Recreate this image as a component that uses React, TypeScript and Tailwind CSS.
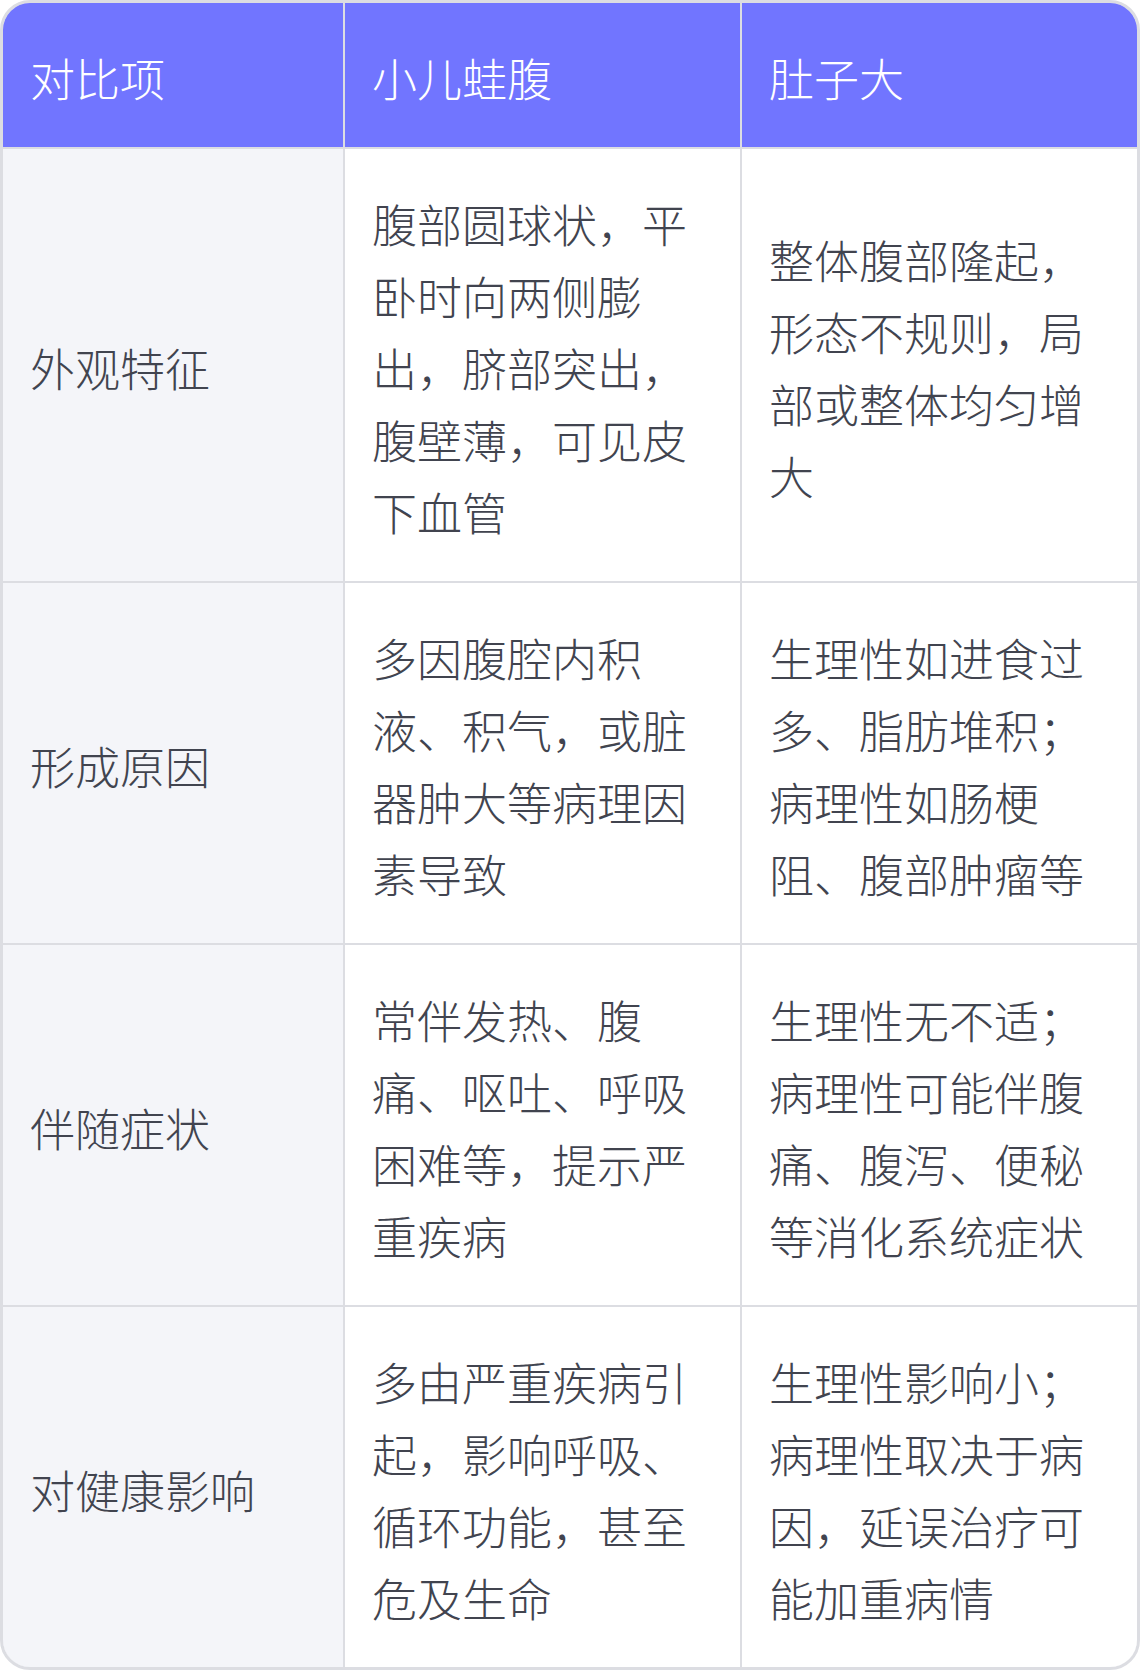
const rows = [
  {
    item: "外观特征",
    frog: "腹部圆球状，平卧时向两侧膨出，脐部突出，腹壁薄，可见皮下血管",
    big: "整体腹部隆起，形态不规则，局部或整体均匀增大",
  },
  {
    item: "形成原因",
    frog: "多因腹腔内积液、积气，或脏器肿大等病理因素导致",
    big: "生理性如进食过多、脂肪堆积；病理性如肠梗阻、腹部肿瘤等",
  },
  {
    item: "伴随症状",
    frog: "常伴发热、腹痛、呕吐、呼吸困难等，提示严重疾病",
    big: "生理性无不适；病理性可能伴腹痛、腹泻、便秘等消化系统症状",
  },
  {
    item: "对健康影响",
    frog: "多由严重疾病引起，影响呼吸、循环功能，甚至危及生命",
    big: "生理性影响小；病理性取决于病因，延误治疗可能加重病情",
  },
];

const cell = "flex items-center pl-[27px] pr-[28px] pt-[39px] pb-[33px]";

export default function App() {
  return (
    <div
      className="w-[1140px] bg-white"
      style={{ fontFamily: '"Noto Sans CJK SC", "Noto Sans", sans-serif' }}
    >
      <div className="rounded-[30px] border-[3px] border-[#dcdde2] overflow-hidden">
        <div className="grid grid-cols-[340px_395px_395px] gap-[2px] bg-[#dcdde2] text-[45px] leading-[72px] font-extralight">
          {/* header */}
          <div className={`${cell} bg-[#7175ff] text-white`}>对比项</div>
          <div className={`${cell} bg-[#7175ff] text-white`}>小儿蛙腹</div>
          <div className={`${cell} bg-[#7175ff] text-white`}>肚子大</div>

          {rows.map((row) => (
            <div key={row.item} className="contents">
              <div className={`${cell} bg-[#f4f5f9] text-[#41444f]`}>{row.item}</div>
              <div className={`${cell} bg-white text-[#41444f]`}>{row.frog}</div>
              <div className={`${cell} bg-white text-[#41444f]`}>{row.big}</div>
            </div>
          ))}
        </div>
      </div>
    </div>
  );
}
